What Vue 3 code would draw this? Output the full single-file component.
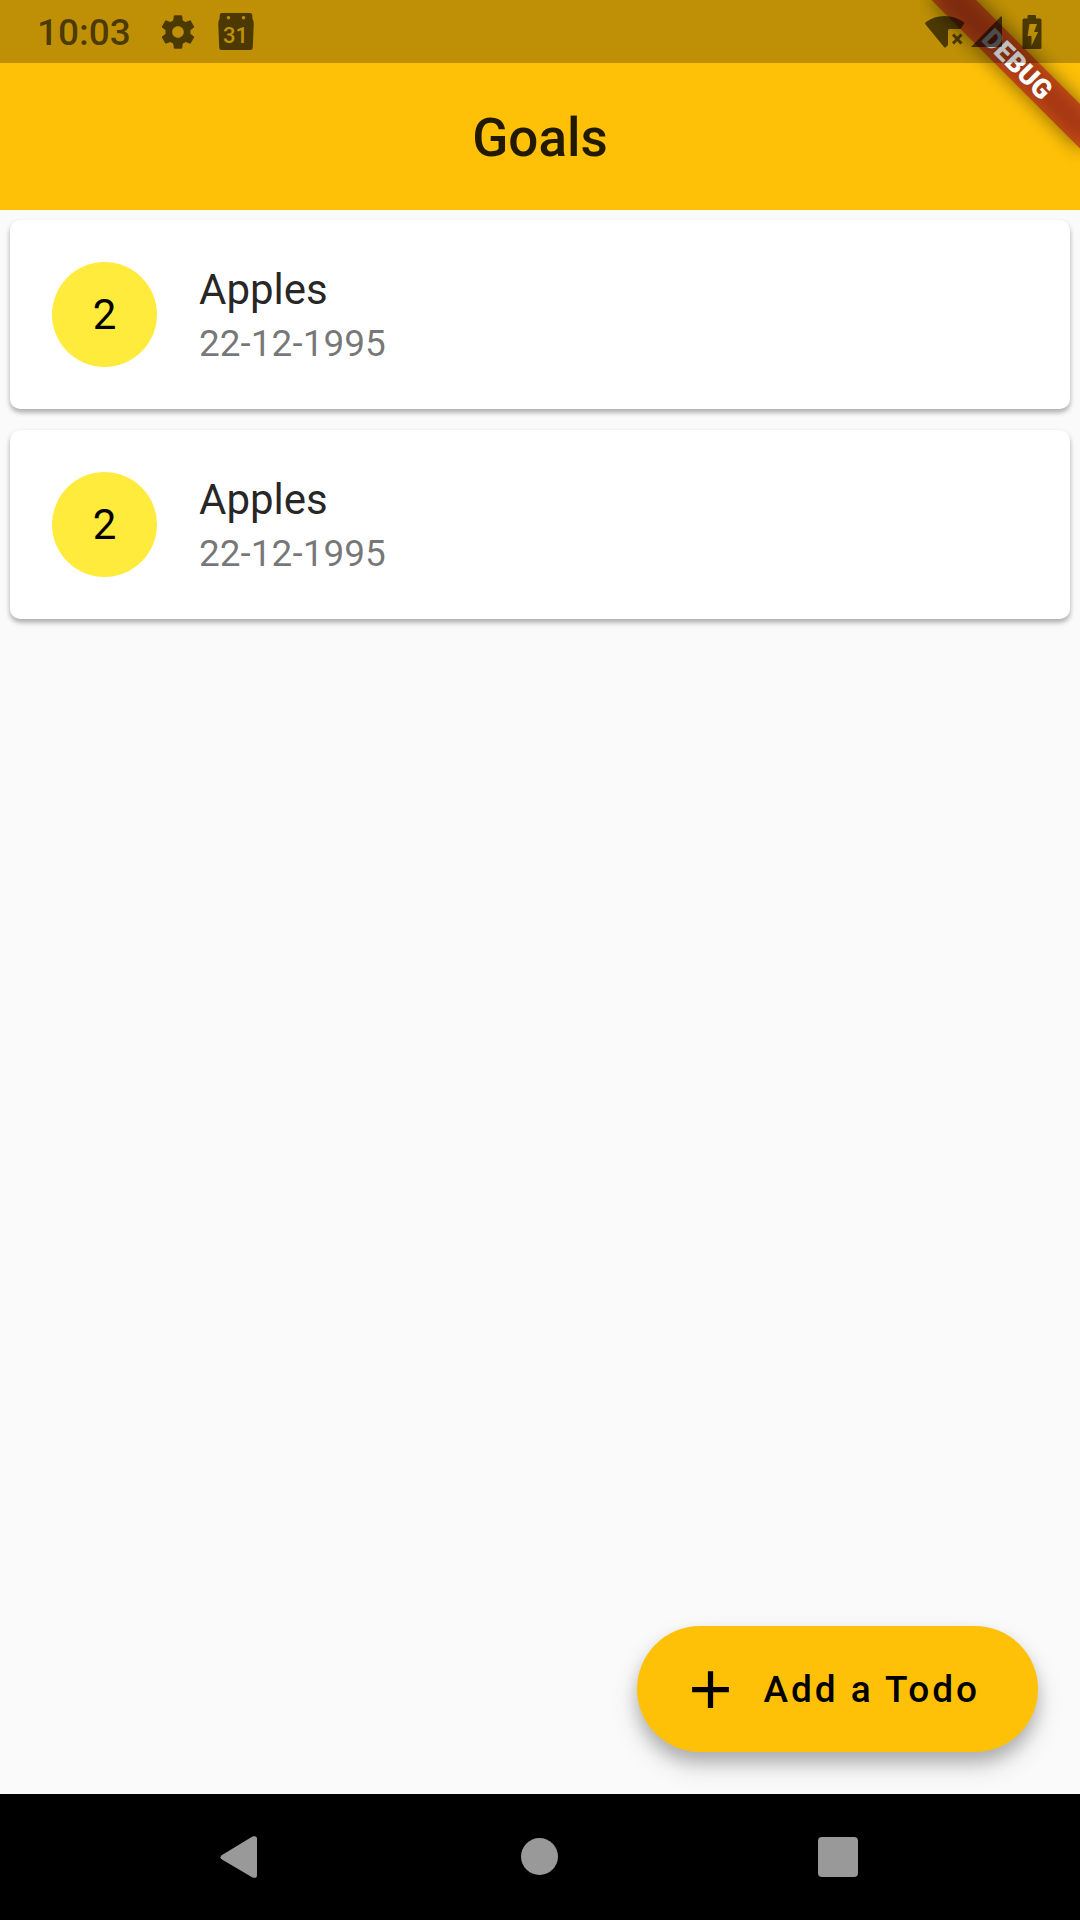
<script setup>
const goals = [
  { id: 1, count: 2, title: 'Apples', date: '22-12-1995' },
  { id: 2, count: 2, title: 'Apples', date: '22-12-1995' },
]
</script>

<template>
  <div class="screen">
    <header class="app-bar">
      <h1>Goals</h1>
    </header>

    <svg class="banner" viewBox="0 0 160 180" width="160" height="180" aria-hidden="true">
      <defs>
        <filter id="soft" x="-50%" y="-150%" width="200%" height="400%">
          <feGaussianBlur stdDeviation="10" />
        </filter>
      </defs>
      <g transform="translate(160 0) rotate(45)">
        <rect x="-105" y="73.5" width="210" height="31.5" fill="#000" fill-opacity="0.5" filter="url(#soft)" />
        <rect x="-105" y="73.5" width="210" height="31.5" fill="#b71c1c" fill-opacity="0.63" />
        <text x="1" y="99" text-anchor="middle" class="banner-text">DEBUG</text>
      </g>
    </svg>

    <div class="status-bar">
      <div class="status-group">
        <span class="clock">10:03</span>
        <svg class="gear" width="40" height="40" viewBox="0 0 24 24">
          <path d="M19.43 12.98c.04-.32.07-.64.07-.98s-.03-.66-.07-.98l2.11-1.65c.19-.15.24-.42.12-.64l-2-3.46c-.12-.22-.39-.3-.61-.22l-2.49 1c-.52-.4-1.08-.73-1.69-.98l-.38-2.65C14.46 2.18 14.25 2 14 2h-4c-.25 0-.46.18-.49.42l-.38 2.65c-.61.25-1.17.59-1.69.98l-2.49-1c-.23-.09-.49 0-.61.22l-2 3.46c-.13.22-.07.49.12.64l2.11 1.65c-.04.32-.07.65-.07.98s.03.66.07.98l-2.11 1.65c-.19.15-.24.42-.12.64l2 3.46c.12.22.39.3.61.22l2.49-1c.52.4 1.08.73 1.69.98l.38 2.65c.03.24.24.42.49.42h4c.25 0 .46-.18.49-.42l.38-2.65c.61-.25 1.17-.59 1.69-.98l2.49 1c.23.09.49 0 .61-.22l2-3.46c.12-.22.07-.49-.12-.64l-2.11-1.65zM12 15.5c-1.93 0-3.5-1.57-3.5-3.5s1.57-3.5 3.5-3.5 3.5 1.57 3.5 3.5-1.57 3.5-3.5 3.5z" />
        </svg>
        <svg class="calendar" width="36" height="37" viewBox="0 0 36 37">
          <path fill-rule="evenodd" d="M3.500 0H32.500Q34 0 34.200 2L34.500 6Q36 8 35.700 11L34.800 34.500Q34.800 37 32.500 37H3.500Q1.200 37 1.200 34.500L.3 11Q0 8 1.500 6L1.800 2Q2 0 3.500 0ZM10.500 3a1.700 1.700 0 1 0 .01 0ZM25.500 3a1.700 1.700 0 1 0 .01 0Z" />
          <text x="17.500" y="30" text-anchor="middle" class="calendar-day">31</text>
        </svg>
      </div>
      <div class="status-group">
        <svg width="40" height="34" viewBox="0 0 40 34">
          <path d="M.6 9.500C-.2 8.600 0 7.700 1 7Q9 1 19.700 1T38.500 7Q39.800 8 39 9L35.500 14H24.500Q23 14 23 15.500V30L21 32Q20 33 19 32Z" />
          <path d="M28 19.500L36.500 28.500M36.500 19.500L28 28.500" class="cross" />
        </svg>
        <svg class="signal" width="31" height="31" viewBox="0 0 31 31">
          <path d="M0 31L29.500.8Q31-.4 31 1.500V29.500Q31 31 29.500 31Z" />
        </svg>
        <svg class="battery" width="20" height="34" viewBox="0 0 20 34">
          <path fill-rule="evenodd" d="M6.500 0H13Q14 0 14 1V3.500H18Q19.500 3.500 19.500 5V32.500Q19.500 34 18 34H2Q.5 34 .5 32.500V5Q.5 3.500 2 3.500H5.500V1Q5.500 0 6.500 0ZM7.500 9L5.500 21H9.500V31L16 17H12L15 9Z" />
        </svg>
      </div>
    </div>

    <main>
      <ul class="goals">
        <li v-for="goal in goals" :key="goal.id" class="card">
          <span class="avatar">{{ goal.count }}</span>
          <div>
            <h2>{{ goal.title }}</h2>
            <p>{{ goal.date }}</p>
          </div>
        </li>
      </ul>
      <button type="button" class="fab">
        <svg width="63" height="63" viewBox="0 0 24 24" aria-hidden="true">
          <path d="M19 13h-6v6h-2v-6H5v-2h6V5h2v6h6v2z" />
        </svg>
        <span>Add a Todo</span>
      </button>
    </main>

    <nav class="nav-bar">
      <button type="button" aria-label="Back">
        <svg width="42" height="42" viewBox="0 0 42 42">
          <path d="M2 19L32.500.6Q37 -1 37 3V39Q37 43 32.500 41.400L2 23.500Q-1 21.200 2 19Z" />
        </svg>
      </button>
      <button type="button" aria-label="Home">
        <svg width="42" height="42" viewBox="0 0 42 42"><circle cx="20.500" cy="20.500" r="18.500" /></svg>
      </button>
      <button type="button" aria-label="Recent apps">
        <svg width="42" height="42" viewBox="0 0 42 42"><rect x="0" y="1" width="40" height="40" rx="4" /></svg>
      </button>
    </nav>
  </div>
</template>

<style>
body {
  margin: 0;
}
</style>

<style scoped>
.screen {
  position: relative;
  display: flex;
  flex-direction: column;
  min-height: 100vh;
  background: #fafafa;
  font-family: Roboto, "Liberation Sans", sans-serif;
}

h1,
h2,
p,
ul {
  margin: 0;
  padding: 0;
  font-weight: 400;
}

svg {
  display: block;
  flex: none;
}

.app-bar {
  box-sizing: border-box;
  height: 210px;
  padding-top: 63px;
  background: #ffc107;
}

.app-bar h1 {
  color: rgba(0, 0, 0, 0.87);
  font-size: 53px;
  font-weight: 500;
  line-height: 150px;
  text-align: center;
}

.banner {
  position: absolute;
  top: 0;
  right: 0;
  overflow: hidden;
}

.banner-text {
  fill: #fff;
  font-size: 27px;
  font-weight: 900;
}

.status-bar {
  position: absolute;
  top: 0;
  left: 0;
  right: 0;
  display: flex;
  align-items: center;
  justify-content: space-between;
  box-sizing: border-box;
  height: 63px;
  padding: 0 38px 0 37px;
  background: rgba(0, 0, 0, 0.25);
  color: rgba(0, 0, 0, 0.6);
  fill: rgba(0, 0, 0, 0.6);
}

.status-group {
  display: flex;
  align-items: center;
}

.clock {
  padding-top: 2px;
  font-size: 37px;
  font-weight: 500;
  line-height: 61px;
}

.gear {
  margin-left: 27px;
}

.calendar {
  margin-left: 20px;
}

.calendar-day {
  fill: #bf9105;
  font-size: 22px;
  font-weight: 500;
}

.cross {
  fill: none;
  stroke: rgba(0, 0, 0, 0.6);
  stroke-width: 3;
}

.signal {
  margin-left: 6px;
}

.battery {
  margin-left: 20px;
}

main {
  display: flex;
  flex: 1;
  flex-direction: column;
  justify-content: space-between;
}

.goals {
  display: flex;
  flex-direction: column;
  gap: 21px;
  padding: 10px;
  list-style: none;
}

.card {
  display: flex;
  align-items: center;
  gap: 42px;
  box-sizing: border-box;
  min-height: 189px;
  padding: 0 42px;
  border-radius: 10px;
  background: #fff;
  box-shadow:
    0 4px 5px rgba(0, 0, 0, 0.22),
    0 2px 5px rgba(0, 0, 0, 0.12);
}

.avatar {
  width: 105px;
  height: 105px;
  flex: none;
  border-radius: 50%;
  background: #ffeb3b;
  font-size: 42px;
  line-height: 105px;
  text-align: center;
}

.card h2 {
  color: rgba(0, 0, 0, 0.87);
  font-size: 42px;
  line-height: 58px;
}

.card p {
  color: rgba(0, 0, 0, 0.54);
  font-size: 37px;
  line-height: 50px;
}

button {
  border: 0;
  font-family: inherit;
  cursor: pointer;
}

.fab {
  display: flex;
  align-items: center;
  align-self: flex-end;
  gap: 21px;
  height: 126px;
  margin: 42px;
  padding: 0 58px 0 42px;
  border-radius: 63px;
  background: #ffc107;
  box-shadow:
    0 10px 16px rgba(0, 0, 0, 0.2),
    0 14px 28px rgba(0, 0, 0, 0.14);
  color: #000;
  font-size: 37px;
  font-weight: 500;
  letter-spacing: 3px;
}

.nav-bar {
  display: flex;
  height: 126px;
  padding: 0 8.5%;
  background: #000;
}

.nav-bar button {
  display: flex;
  flex: 1;
  align-items: center;
  justify-content: center;
  padding: 0;
  background: none;
  fill: #999;
}
</style>
